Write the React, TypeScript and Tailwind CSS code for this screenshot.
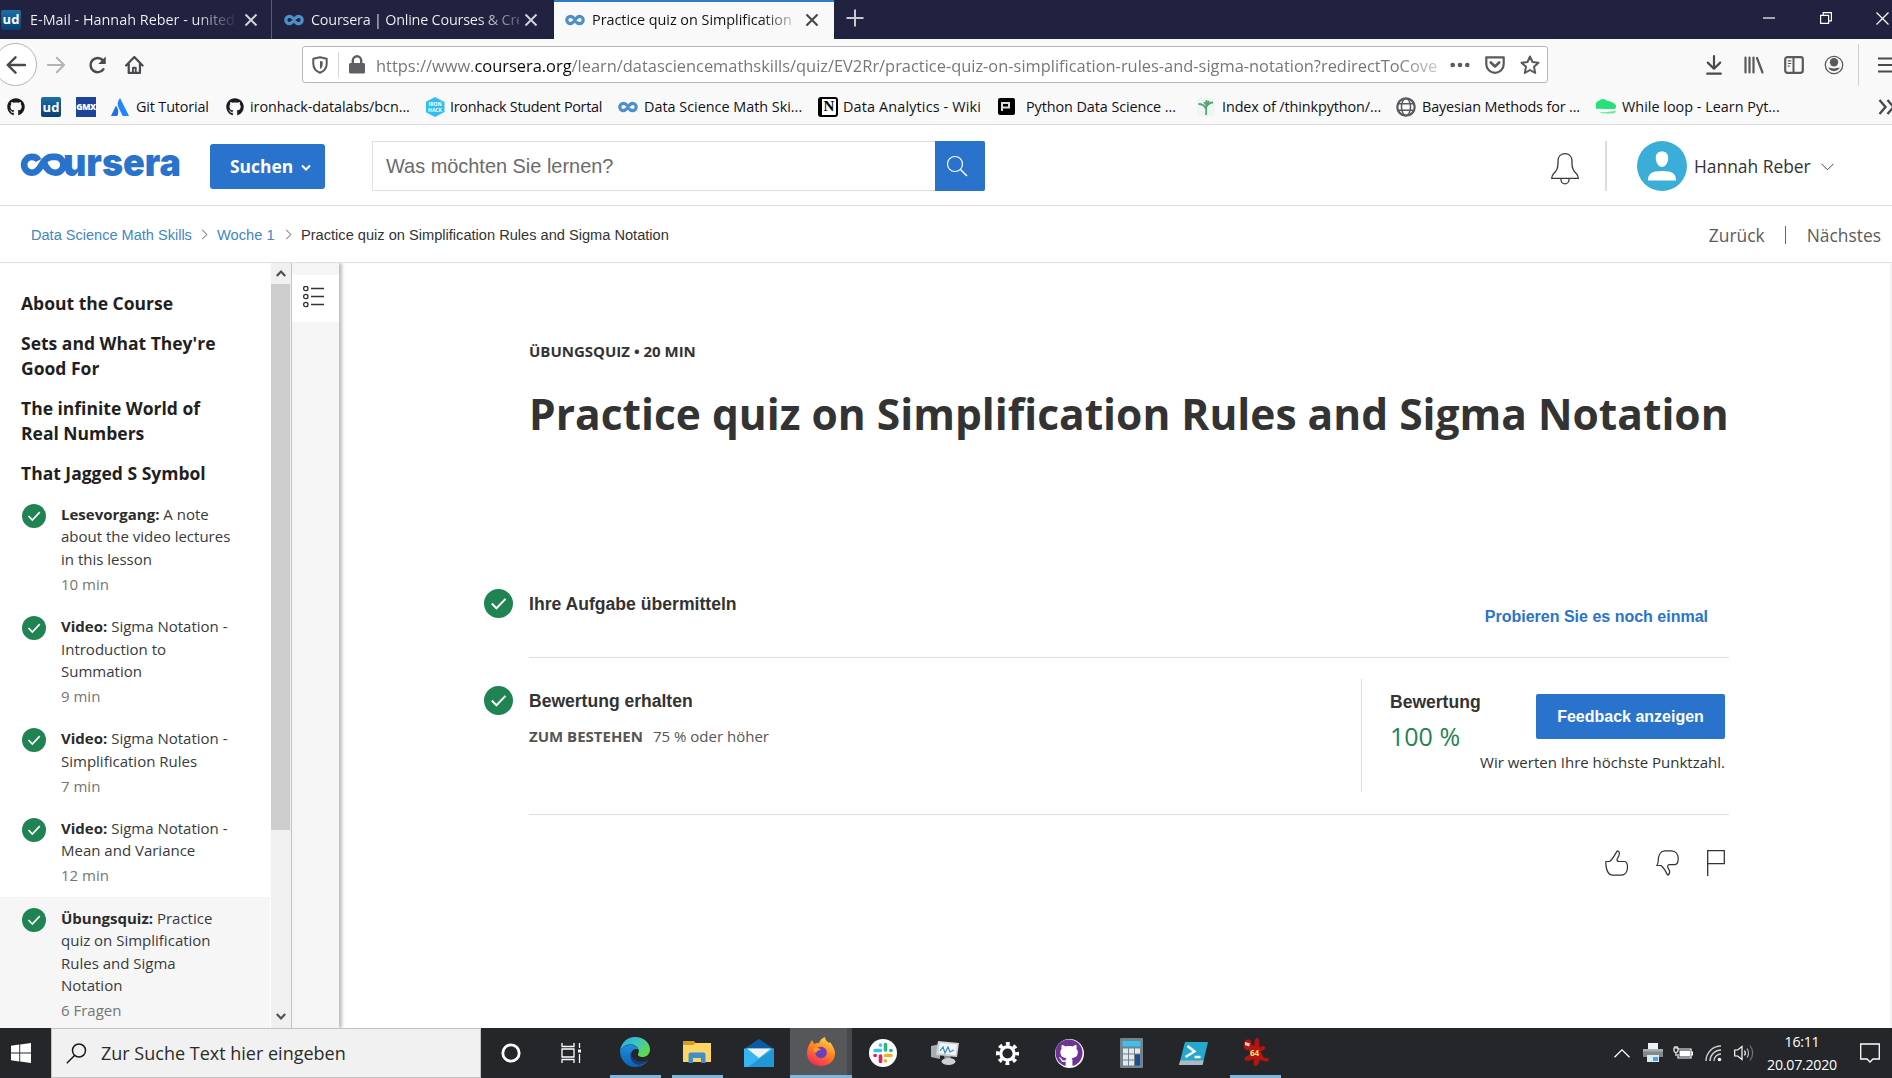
import React, { ReactNode } from 'react';
import { FaGithub } from 'react-icons/fa';

const GREEN = '#1f8354';

function Infinity8({ className, color = '#4f8fc9' }: { className: string; color?: string }) {
  return (
    <svg viewBox="0 0 40 22" className={className} fill="none" stroke={color} strokeWidth="6.4" strokeLinecap="round">
      <path d="M16.5 6C14.8 4.3 13.2 3.6 11 3.6a7.4 7.4 0 0 0 0 14.8c8.500 0 9.500-14.800 18-14.800a7.400 7.400 0 0 1 0 14.800c-2.200 0-3.800-.7-5.500-2.400" />
    </svg>
  );
}

function UdIcon() {
  return (
    <div className="flex h-5 w-5 shrink-0 items-center justify-center rounded-[2px] bg-gradient-to-b from-[#1d6fa8] to-[#0a3f73] text-[13px] font-bold leading-none text-white">
      ud
    </div>
  );
}

function Check({ size }: { size: number }) {
  return (
    <svg width={size} height={size} viewBox="0 0 24 24" className="shrink-0">
      <circle cx="12" cy="12" r="12" fill={GREEN} />
      <path d="M6.500 12l3.800 4L17.800 8.200" fill="none" stroke="#fff" strokeWidth="1.700" />
    </svg>
  );
}

function X({ color, w = 2 }: { color: string; w?: number }) {
  return (
    <svg width="14" height="14" viewBox="0 0 14 14" className="shrink-0">
      <path d="M1.500 1.500l11 11M12.500 1.500l-11 11" stroke={color} strokeWidth={w} />
    </svg>
  );
}

function TabBar() {
  return (
    <div className="flex h-[39px] bg-[#20223f] text-[14.4px] text-[#f0f0f4]">
      <div className="flex w-[272px] items-center border-r border-[#5a5c75] pl-[1px]">
        <UdIcon />
        <span className="ml-[9px] w-[208px] whitespace-nowrap bg-gradient-to-r from-[#f4f4f8] from-80% to-[#20223f] bg-clip-text text-transparent">
          E-Mail - Hannah Reber - united
        </span>
        <span className="ml-[6px]"><X color="#d2d2da" /></span>
      </div>
      <div className="flex w-[282px] items-center pl-[12px]">
        <Infinity8 className="h-[12px] w-[20px] shrink-0" />
        <span className="ml-[7px] w-[208px] whitespace-nowrap bg-gradient-to-r from-[#f4f4f8] from-80% to-[#20223f] to-110% bg-clip-text tracking-[-0.220px] text-transparent">
          Coursera | Online Courses &amp; Cre
        </span>
        <span className="ml-[5px]"><X color="#d2d2da" /></span>
      </div>
      <div className="flex w-[280px] items-center border-t-2 border-[#2f7bc4] bg-[#f9f9fa] pb-px pl-[11px]">
        <Infinity8 className="h-[12px] w-[20px] shrink-0" />
        <span className="ml-[7px] w-[209px] whitespace-nowrap bg-gradient-to-r from-[#111] from-80% to-[#f9f9fa] bg-clip-text tracking-[-0.020px] text-transparent">
          Practice quiz on Simplification
        </span>
        <span className="ml-[4px]"><X color="#4a4a4f" w={2.2} /></span>
      </div>
      <svg width="18" height="18" viewBox="0 0 18 18" className="ml-[12px] mt-[9px]">
        <path d="M9 0.500v17M0.500 9h17" stroke="#c9c9d2" strokeWidth="2" />
      </svg>
      <div className="ml-auto flex items-center pb-[3px]">
        <svg width="12" height="12" viewBox="0 0 12 12"><path d="M0 6h12" stroke="#fff" strokeWidth="1.200" /></svg>
        <svg width="12" height="12" viewBox="0 0 12 12" className="ml-[45px]" fill="none" stroke="#fff" strokeWidth="1.200">
          <path d="M.6 3.400h8v8h-8zM3.200 3.400V.6h8.200v8.200H8.600" />
        </svg>
        <svg width="13" height="13" viewBox="0 0 13 13" className="ml-[44px] mr-[3px]"><path d="M.5.5l12 12M12.500.5l-12 12" stroke="#fff" strokeWidth="1.200" /></svg>
      </div>
    </div>
  );
}

function Toolbar() {
  return (
    <div className="flex h-[51px] items-center overflow-hidden bg-[#f9f9fa]">
      <div className="-ml-[6px] flex h-[43px] w-[43px] shrink-0 items-center justify-center rounded-full border border-[#b4b4b8] bg-white">
        <svg width="20" height="18" viewBox="0 0 20 18" fill="none" stroke="#4a4a4e" strokeWidth="2.400" strokeLinecap="round" strokeLinejoin="round">
          <path d="M19 9H2M9.500 1.300L1.700 9l7.800 7.700" />
        </svg>
      </div>
      <svg width="20" height="18" viewBox="0 0 20 18" fill="none" stroke="#b5b5b8" strokeWidth="2.200" strokeLinecap="round" strokeLinejoin="round" className="ml-[10px]">
        <path d="M1 9h17M10.500 1.300L18.300 9l-7.800 7.700" />
      </svg>
      <svg width="20" height="20" viewBox="0 0 20 20" className="ml-[22px]" fill="none" stroke="#4a4a4e" strokeWidth="2.600">
        <path d="M16.500 14.500A7.600 7.600 0 1 1 16 5" strokeLinecap="round" />
        <path d="M19 1v8h-8z" fill="#4a4a4e" stroke="none" />
      </svg>
      <svg width="20" height="20" viewBox="0 0 20 20" className="ml-[19px]" fill="none" stroke="#4a4a4e" strokeWidth="2.400" strokeLinejoin="round" strokeLinecap="round">
        <path d="M1.200 10.500L10 1.500l8.800 9M4 9v9.500h12V9" />
        <path d="M8.500 18v-5h3v5" strokeWidth="2" />
      </svg>
      <div className="ml-[158px] flex h-[37px] w-[1246px] shrink-0 items-center rounded-[3px] border border-[#b6b6ba] bg-white">
        <svg width="16" height="18" viewBox="0 0 16 18" className="ml-[9px]" fill="none" stroke="#5a5a5e" strokeWidth="2">
          <path d="M8 1.200l6.700 1.600v5c0 4.500-2.500 7.300-6.700 9-4.200-1.700-6.700-4.500-6.700-9v-5z" strokeLinejoin="round" />
          <path d="M8 5v8c1.800-1 2.700-2.500 2.700-5V5.500z" fill="#5a5a5e" stroke="none" />
        </svg>
        <div className="ml-[10px] h-[26px] w-px bg-[#d7d7db]" />
        <svg width="16" height="19" viewBox="0 0 16 19" className="ml-[10px]">
          <rect x="0" y="8" width="16" height="10.500" rx="1.500" fill="#5f5f63" />
          <path d="M3.800 9V5.500a4.200 4.200 0 0 1 8.400 0V9" fill="none" stroke="#5f5f63" strokeWidth="2.400" />
        </svg>
        <span className="ml-[11px] w-[1064px] whitespace-nowrap pt-[3px] text-[16.42px] leading-6 text-[#77777b] [mask-image:linear-gradient(to_right,black_96%,transparent_102%)]">
          https://www.<span className="text-[#0c0c0d]">coursera.org</span>/learn/datasciencemathskills/quiz/EV2Rr/practice-quiz-on-simplification-rules-and-sigma-notation?redirectToCove
        </span>
        <svg width="20" height="6" viewBox="0 0 20 6" className="ml-[10px]" fill="#5a5a5e"><circle cx="2.700" cy="3" r="2.300" /><circle cx="10" cy="3" r="2.300" /><circle cx="17.300" cy="3" r="2.300" /></svg>
        <svg width="20" height="18" viewBox="0 0 20 18" className="ml-[15px]" fill="none" stroke="#5a5a5e" strokeWidth="2.200" strokeLinecap="round" strokeLinejoin="round">
          <path d="M1.300 1.300h17.400v7a8.700 8.500 0 0 1-17.400 0z" /><path d="M5.800 6.500l4.200 4 4.200-4" strokeWidth="2.600" />
        </svg>
        <svg width="20" height="20" viewBox="0 0 20 20" className="ml-[15px]" fill="none" stroke="#5a5a5e" strokeWidth="2" strokeLinejoin="round">
          <path d="M10 1.500l2.500 5.500 6 .700-4.500 4.100 1.200 6.200L10 15l-5.200 3 1.200-6.200L1.500 7.700l6-.7z" />
        </svg>
      </div>
      <svg width="16" height="20" viewBox="0 0 16 20" className="ml-[158px] shrink-0" fill="none" stroke="#4a4a4e" strokeWidth="2.200" strokeLinecap="round" strokeLinejoin="round">
        <path d="M8 1.200v12M1.800 7.600L8 13.700l6.200-6.100M1.200 18.700h13.600" />
      </svg>
      <svg width="20" height="18" viewBox="0 0 20 18" className="ml-[22px] shrink-0" fill="none" stroke="#5a5a5e" strokeWidth="2.200" strokeLinecap="round">
        <path d="M1.500 1.500v15M5.500 1.500v15M9.500 1.500v15M13 2l5.500 14.500" />
      </svg>
      <svg width="20" height="18" viewBox="0 0 20 18" className="ml-[20px] shrink-0" fill="none" stroke="#5a5a5e" strokeWidth="2.200">
        <rect x="1.200" y="1.200" width="17.600" height="15.600" rx="2.200" /><path d="M9.500 1v16" strokeWidth="2" /><path d="M3.800 4.800h3.500M3.800 7.500h3.500M3.800 10.200h2" strokeWidth="1.200" />
      </svg>
      <svg width="20" height="20" viewBox="0 0 20 20" className="ml-[20px] shrink-0" fill="#5a5a5e">
        <circle cx="10" cy="10" r="8.700" fill="none" stroke="#5a5a5e" strokeWidth="1.300" /><circle cx="10" cy="7.200" r="4.200" /><path d="M4.200 12.600c2 .2 3.500 1 5.800 1s3.800-.8 5.800-1a6.500 6.500 0 0 1-11.600 0z" />
      </svg>
      <div className="ml-[14px] h-[42px] w-px shrink-0 bg-[#d0d0d4]" />
      <svg width="14" height="16" viewBox="0 0 14 16" className="ml-[19px] shrink-0" stroke="#4a4a4e" strokeWidth="2"><path d="M0 1.500h14M0 8h14M0 14.500h14" /></svg>
    </div>
  );
}

function Bookmark({ width, icon, children }: { width: string; icon: ReactNode; children?: ReactNode }) {
  return (
    <div className={`flex shrink-0 items-center whitespace-nowrap ${width}`}>
      <span className="flex h-5 w-5 shrink-0 items-center justify-center">{icon}</span>
      {children}
    </div>
  );
}

function Bookmarks() {
  return (
    <div className="flex h-[35px] items-center border-b border-[#dcdcde] bg-[#f9f9fa] pl-[6px] text-[14.4px] text-[#111114]">
      <Bookmark width="w-[35px]" icon={<FaGithub size={18} color="#1b1b1f" />} />
      <Bookmark width="w-[35px]" icon={<UdIcon />} />
      <Bookmark width="w-[34px]" icon={<span className="flex h-5 w-5 items-center justify-center bg-[#1c449b] text-[8.500px] font-extrabold tracking-[-0.400px] text-white">GMX</span>} />
      <Bookmark width="w-[115px]" icon={
        <svg width="18" height="18" viewBox="0 0 18 18"><path d="M9 0c-2.800 3.500-3 7-1 10.500L11.700 18H18z" fill="#2684ff" /><path d="M5 7.500L0 18h6.200C8 14.500 7.500 11 5 7.500z" fill="#1f6fe0" /></svg>
      }><span className="ml-[6px] tracking-[-0.150px]">Git Tutorial</span></Bookmark>
      <Bookmark width="w-[200px]" icon={<FaGithub size={18} color="#1b1b1f" />}><span className="ml-[5px] tracking-[-0.060px]">ironhack-datalabs/bcn...</span></Bookmark>
      <Bookmark width="w-[193px]" icon={
        <span className="flex h-5 w-[19px] flex-col items-center justify-center bg-[#35bdf0] text-[5px] font-bold leading-[6px] text-white [clip-path:polygon(50%_0,100%_25%,100%_75%,50%_100%,0_75%,0_25%)]"><span>IRON</span><span>HACK</span></span>
      }><span className="ml-[5px] tracking-[-0.290px]">Ironhack Student Portal</span></Bookmark>
      <Bookmark width="w-[200px]" icon={<Infinity8 className="h-[12px] w-[20px]" />}><span className="ml-[6px] tracking-[-0.010px]">Data Science Math Ski...</span></Bookmark>
      <Bookmark width="w-[178px]" icon={
        <span className="flex h-5 w-5 items-center justify-center rounded-[3px] border-2 border-l-4 border-black bg-white font-['Liberation_Serif'] text-[15px] font-bold leading-none text-black">N</span>
      }><span className="ml-[5px] tracking-[0.150px]">Data Analytics - Wiki</span></Bookmark>
      <Bookmark width="w-[200px]" icon={
        <span className="flex h-[17px] w-[17px] items-center justify-center rounded-[2px] bg-black"><svg width="10" height="9" viewBox="0 0 10 9" fill="none" stroke="#ddd" strokeWidth="2"><path d="M1 9V1h7v4.500H2" /></svg></span>
      }><span className="ml-[10px] tracking-[-0.080px]">Python Data Science ...</span></Bookmark>
      <Bookmark width="w-[200px]" icon={
        <svg width="18" height="18" viewBox="0 0 18 18" fill="none" stroke="#5aa27a" strokeWidth="1.800"><rect width="18" height="18" fill="#edf7ef" stroke="none" /><path d="M9 17C9.500 13 9 8 9.500 2M9 11C8 8 5 6 1.500 6M9.500 8.500C11 6 13 4.500 16 4.500M7 4l2.500 3L12 3" /></svg>
      }><span className="ml-[6px] tracking-[-0.100px]">Index of /thinkpython/...</span></Bookmark>
      <Bookmark width="w-[200px]" icon={
        <svg width="20" height="20" viewBox="0 0 20 20" fill="none" stroke="#5a5a5e" strokeWidth="1.500"><circle cx="10" cy="10" r="8.700" strokeWidth="2.200" /><ellipse cx="10" cy="10" rx="4.500" ry="8.500" /><path d="M2 6.800h16M2 13.200h16" /></svg>
      }><span className="ml-[6px] tracking-[-0.130px]">Bayesian Methods for ...</span></Bookmark>
      <Bookmark width="w-[259px]" icon={
        <svg width="20" height="16" viewBox="0 0 20 16"><path d="M0 4.500c0-1.500 1.500-2.500 3.500-3 2-2 5-2 7 0 4 .5 8 2.500 9.500 5 .3 2-.5 3-2 3.500C12 10.500 6 9 0 10z" fill="#26e07b" /><path d="M3 13c5 1 11-.5 17-1-1 2.500-3 2.500-7 2.500-4 .2-8 0-10-1.500z" fill="#5fe79d" /></svg>
      }><span className="ml-[6px] tracking-[0.010px]">While loop - Learn Pyt...</span></Bookmark>
      <svg width="16" height="16" viewBox="0 0 16 16" className="ml-[23px] shrink-0" fill="none" stroke="#4a4a4e" strokeWidth="2.400"><path d="M1.500 1l6 7-6 7M9.500 1l6 7-6 7" /></svg>
    </div>
  );
}

function SiteHeader() {
  return (
    <div className="flex h-[81px] items-start border-b border-[#dedede] bg-white">
      <svg width="162" height="64" viewBox="0 -14 162 64" className="ml-[20px] mt-[8px]">
        <path
          d="M18.500 13.500C17 10.800 14.800 9.900 12 9.900a7.900 7.900 0 0 0 0 15.800c4.800 0 7.200-3.600 9.600-7.900C24 13.500 26.500 9.900 32 9.900h3.500a7.900 7.900 0 0 1 0 15.800c-5.500 0-9-3.500-11-9"
          fill="none" stroke="#2a73cc" strokeWidth="6.600"
        />
        <text x="43" y="28.800" fontFamily="Inter" fontWeight="900" fontSize="39" textLength="118" lengthAdjust="spacingAndGlyphs" fill="#2a73cc">ursera</text>
      </svg>
      <button className="ml-[28px] mt-[19px] flex h-[45px] w-[115px] items-center rounded-[3px] bg-[#2a73cc] pl-[20px] text-[17.400px] font-bold text-white">
        Suchen
        <svg width="10" height="8" viewBox="0 0 10 8" className="ml-[8px] mt-[3px]" fill="none" stroke="#fff" strokeWidth="2"><path d="M1 1.500l4 4 4-4" /></svg>
      </button>
      <div className="ml-[47px] mt-[16px] flex h-[50px] w-[613px] border border-r-0 border-[#dedede]">
        <div className="flex flex-1 items-center pl-[13px] pt-px font-['Liberation_Sans'] text-[19.930px] text-[#6b6b6b]">Was möchten Sie lernen?</div>
        <div className="-my-px flex w-[50px] items-center justify-center rounded-r-[2px] bg-[#2a73cc]">
          <svg width="22" height="22" viewBox="0 0 22 22" className="-ml-[7px]" fill="none" stroke="#fff" strokeWidth="1.200"><circle cx="9" cy="9" r="7.500" /><path d="M14.500 14.500L21 21" strokeWidth="1.500" /></svg>
        </div>
      </div>
      <div className="ml-auto mt-[16px] flex h-[50px] items-center">
        <svg width="28" height="32" viewBox="0 0 28 32" className="mt-[6px]" fill="none" stroke="#3a3a3a" strokeWidth="1.300">
          <path d="M.7 25.300c0-2 .8-3.500 2.300-5C6 17.500 7 14.500 7 10.500V8c0-4.500 3-7.300 7-7.300S21 3.500 21 8v2.500c0 4 1 7 4 9.800 1.500 1.500 2.300 3 2.300 5zM10 25.500v1.300a4 4 0 0 0 8 0v-1.300" />
        </svg>
        <div className="ml-[26px] h-[50px] w-[2px] bg-[#dcdcdc]" />
        <svg width="50" height="50" viewBox="0 0 50 50" className="ml-[30px]">
          <circle cx="25" cy="25" r="25" fill="#3badd9" />
          <path d="M25 10.500c4.200 0 6.200 2.500 6.200 6.500 0 4.500-2.700 9-6.200 9s-6.200-4.500-6.200-9c0-4 2-6.500 6.200-6.500zM11 39.500c0-6.500 3-9.500 14-9.500s14 3 14 9.500z" fill="#fff" />
        </svg>
        <span className="ml-[7px] w-[127px] pt-px text-[17.400px] text-[#333]">Hannah Reber</span>
        <svg width="13" height="8" viewBox="0 0 13 8" className="mr-[58px] mt-px" fill="none" stroke="#444" strokeWidth="1"><path d="M.5.8l6 6 6-6" /></svg>
      </div>
    </div>
  );
}

function Crumb() {
  return <svg width="7" height="11" viewBox="0 0 6 9" fill="none" stroke="#8a8a8a" strokeWidth="0.900"><path d="M1 .5l4 4-4 4" /></svg>;
}

function Breadcrumbs() {
  return (
    <div className="flex h-[57px] items-center border-b border-[#dedede] bg-white pl-[31px] pt-px font-['Liberation_Sans'] text-[14.560px] leading-[20px]">
      <span className="w-[170px] pt-px text-[#3f86c4]">Data Science Math Skills</span>
      <Crumb />
      <span className="ml-[9px] w-[68px] pt-px text-[14.700px] text-[#3f86c4]">Woche 1</span>
      <Crumb />
      <span className="ml-[9px] pt-px text-[14.620px] text-[#333]">Practice quiz on Simplification Rules and Sigma Notation</span>
      <div className="ml-auto mr-[11px] flex items-center font-['Open_Sans'] text-[17.400px] text-[#5b5b5b]">
        <span>Zurück</span>
        <span className="ml-[20px] mr-[21px] h-[18px] w-px bg-[#666]" />
        <span>Nächstes</span>
      </div>
    </div>
  );
}

const lessons = [
  { kind: 'Lesevorgang:', lines: ['A note', 'about the video lectures', 'in this lesson'], meta: '10 min' },
  { kind: 'Video:', lines: ['Sigma Notation -', 'Introduction to', 'Summation'], meta: '9 min' },
  { kind: 'Video:', lines: ['Sigma Notation -', 'Simplification Rules'], meta: '7 min' },
  { kind: 'Video:', lines: ['Sigma Notation -', 'Mean and Variance'], meta: '12 min' },
  { kind: 'Übungsquiz:', lines: ['Practice', 'quiz on Simplification', 'Rules and Sigma', 'Notation'], meta: '6 Fragen', active: true },
];

function Sidebar() {
  return (
    <div className="relative z-10 flex h-full w-[340px] shrink-0">
      <div className="h-full w-[271px] overflow-hidden">
        <div className="flex flex-col gap-[15px] pl-[21px] pt-[28px] text-[17.500px] font-bold leading-[25px] text-[#1f1f1f]">
          <p>About the Course</p>
          <p>Sets and What They're<br />Good For</p>
          <p>The infinite World of<br />Real Numbers</p>
          <p>That Jagged S Symbol</p>
        </div>
        <div className="pt-[7px]">
          {lessons.map((l, i) => (
            <div key={i} className={l.active ? 'mr-px flex bg-[#f6f6f6] pb-[10px] pl-[21.500px] pt-[10px]' : 'flex pb-[10px] pl-[21.500px] pt-[10px]'}>
              <div className="pt-px"><Check size={24} /></div>
              <div className="ml-[15.500px] text-[15px] leading-[22.400px] text-[#373a3c]">
                {l.lines.map((t, j) => (
                  <div key={j} className="whitespace-nowrap">
                    {j === 0 && <b className="text-[#2b2b2b]">{l.kind} </b>}
                    {t}
                  </div>
                ))}
                <div className="pt-[2.500px] text-[#757575]">{l.meta}</div>
              </div>
            </div>
          ))}
        </div>
      </div>
      <div className="flex h-full w-[20px] flex-col items-center bg-[#f0f0f0]">
        <svg width="10" height="7" viewBox="0 0 10 7" className="mr-px mt-[7px] shrink-0" fill="none" stroke="#505050" strokeWidth="2.200"><path d="M.8 6L5 1.600 9.200 6" /></svg>
        <div className="mr-px mt-[7px] h-[546px] w-[19px] shrink-0 bg-[#cdcdcd]" />
        <svg width="10" height="7" viewBox="0 0 10 7" className="mb-[8px] mr-px mt-auto shrink-0" fill="none" stroke="#505050" strokeWidth="2.200"><path d="M.8 1L5 5.400 9.200 1" /></svg>
      </div>
      <div className="h-full w-[48px] border-l border-[#c4c4c4] bg-[#f5f5f5] pt-[12px] shadow-[3px_0_3px_rgba(0,0,0,0.25)]">
        <div className="h-[47px] bg-white pl-[11px] pt-[11px]">
          <svg width="22" height="22" viewBox="0 0 22 22" fill="none" stroke="#333" strokeWidth="1.300">
            <circle cx="2.800" cy="2.500" r="2.200" /><circle cx="2.800" cy="10.500" r="2.200" /><circle cx="2.800" cy="18.500" r="2.200" />
            <path d="M8 2.500H21M8 10.500H21M8 18.500H21" />
          </svg>
        </div>
      </div>
    </div>
  );
}

function Main() {
  return (
    <div className="min-w-0 flex-1 bg-white pl-[144px]">
      <div className="ml-[45px] w-[1200px] pt-[76px]">
        <div className="text-[15px] font-bold leading-[24px] text-[#333]">ÜBUNGSQUIZ • 20 MIN</div>
        <h1 className="mt-[22px] whitespace-nowrap text-[42.500px] font-bold leading-[58px] text-[#333]">Practice quiz on Simplification Rules and Sigma Notation</h1>
      </div>
      <div className="mt-[135px] flex w-[1245px] font-['Liberation_Sans']">
        <div className="pt-[11px]"><Check size={29} /></div>
        <div className="ml-[16px] flex h-[80px] flex-1 justify-between border-b border-[#dedede]">
          <span className="pt-[14px] text-[17.600px] font-bold leading-[24px] text-[#333]">Ihre Aufgabe übermitteln</span>
          <span className="mr-[21px] pt-[27px] text-[16px] font-bold leading-[24px] text-[#2a73cc]">Probieren Sie es noch einmal</span>
        </div>
      </div>
      <div className="flex w-[1245px]">
        <div className="pt-[28px]"><Check size={29} /></div>
        <div className="ml-[16px] flex h-[157px] flex-1 justify-between border-b border-[#dedede]">
          <div>
            <div className="pt-[31px] font-['Liberation_Sans'] text-[17.550px] font-bold leading-[24px] text-[#333]">Bewertung erhalten</div>
            <div className="mt-[11px] flex text-[15px] leading-[24px] text-[#555]"><b className="w-[124px]">ZUM BESTEHEN</b><span>75 % oder höher</span></div>
          </div>
          <div className="mt-[21px] flex h-[113px] w-[368px] border-l border-[#dedede]">
            <div className="ml-[28px] w-[90px]">
              <div className="pt-[11px] font-['Liberation_Sans'] text-[17.550px] font-bold leading-[24px] text-[#333]">Bewertung</div>
              <div className="pt-[7px] text-[25px] leading-[30px] text-[#1f8354]">100 %</div>
            </div>
            <div className="mr-[4px] flex flex-1 flex-col items-end pt-[15px]">
              <button className="flex h-[45px] w-[189px] items-center justify-center rounded-[2px] bg-[#2a73cc] font-['Liberation_Sans'] text-[16px] font-bold text-white">Feedback anzeigen</button>
              <div className="whitespace-nowrap pt-[11px] text-[15px] leading-[24px] text-[#333]">Wir werten Ihre höchste Punktzahl.</div>
            </div>
          </div>
        </div>
      </div>
      <div className="flex w-[1241px] justify-end gap-[28px] pt-[35px] text-[#333]">
        <svg width="23" height="26" viewBox="0 0 23 26" fill="none" stroke="currentColor" strokeWidth="1.200" strokeLinejoin="round">
          <path d="M.8 11.500h3.700c3-1.500 5-6.500 7.800-10.700 2 .4 2.500 2 1.700 4.500-.8 2.300-2 3.200-2 4.500 0 1.200.7 1.700 2 1.700h5c2.500 0 3.500 2.500 3.500 5.500 0 4.500-2.200 8.200-6.500 8.200H8c-4.500 0-7.200-5-7.200-13.700z" />
        </svg>
        <svg width="23" height="26" viewBox="0 0 23 26" fill="none" stroke="currentColor" strokeWidth="1.200" strokeLinejoin="round">
          <path d="M.8 15.500c1-1.500 1.400-2.500 1.400-4.500C2.200 4.500 4.800.8 9 .8h6.500c4.300 0 6.700 3.500 6.700 8.200 0 3.500-1.200 5.700-4 5.700h-4.700c-1.500 0-2 .8-1.800 2.200.3 1.500 1.300 2.300 1.800 4 .4 1.800 0 3.500-1.800 4.300C9.500 21.500 8 17.500 5 15.500z" />
        </svg>
        <svg width="18" height="26" viewBox="0 0 18 26" fill="none" stroke="currentColor" strokeWidth="1.300"><path d="M.7 26V.7h16.600v13H.7" /></svg>
      </div>
    </div>
  );
}

function TaskButton({ bar, wide, active, children }: { bar?: boolean; wide?: boolean; active?: boolean; children: ReactNode }) {
  return (
    <div className={active ? 'flex w-[62px] flex-col items-center border-r-[5px] border-[#47484b] bg-[#56575a]' : 'flex w-[62px] flex-col items-center'}>
      <div className={active ? 'flex flex-1 items-center pl-[4px]' : 'flex flex-1 items-center'}>{children}</div>
      {bar && <div className={wide ? '-mr-[5px] h-[3px] w-[62px] bg-[#7db6de]' : 'h-[3px] w-[51px] bg-[#7db6de]'} />}
    </div>
  );
}

function Taskbar() {
  return (
    <div className="flex h-[50px] bg-[#24262a] text-white">
      <div className="flex w-[51px] items-center justify-center pr-[9px]">
        <svg width="20" height="20" viewBox="0 0 20 20" fill="#fff"><path d="M0 2.800l8.300-1.200v8H0zM9.200 1.500L20 0v9.600H9.200zM0 10.500h8.300v8L0 17.300zM9.200 10.500H20V20L9.200 18.500z" /></svg>
      </div>
      <div className="flex w-[430px] items-center border border-[#c3c3c3] bg-[#f1f1f1]">
        <svg width="21" height="21" viewBox="0 0 21 21" className="ml-[14px]" fill="none" stroke="#1a1a1a" strokeWidth="1.500"><circle cx="13" cy="7.500" r="6.500" /><path d="M8.500 12.500L.8 20.200" /></svg>
        <span className="ml-[14px] text-[18px] text-[#2b2b2b]">Zur Suche Text hier eingeben</span>
      </div>
      <div className="-ml-px flex">
        <TaskButton><svg width="20" height="20" viewBox="0 0 20 20"><circle cx="10" cy="10" r="8.200" fill="none" stroke="#fff" strokeWidth="2.800" /></svg></TaskButton>
        <TaskButton><svg width="21" height="20" viewBox="0 0 21 20" fill="none" stroke="#fff" strokeWidth="1.300" className="-ml-[3px]"><path d="M1 0v3.500h12V0M1 20v-3.500h12V20M1 6h12v8H1zM18.500 0v5M18.500 11v9" /><rect x="17" y="6.500" width="3" height="3" fill="#fff" stroke="none" /></svg></TaskButton>
        <TaskButton bar>
          <svg width="30" height="30" viewBox="0 0 30 30">
            <defs>
              <linearGradient id="eg" x1="0" y1="0" x2="1" y2="0.600"><stop offset="0" stopColor="#2ba6dc" /><stop offset="0.500" stopColor="#36c6c8" /><stop offset="1" stopColor="#62d94b" /></linearGradient>
              <linearGradient id="eb" x1="0" y1="0" x2="0" y2="1"><stop offset="0" stopColor="#1b8fdc" /><stop offset="1" stopColor="#1160b8" /></linearGradient>
            </defs>
            <path d="M0 14C1 6 7 0 15 0c9 0 15 6 15 12.500 0 5-4 7.500-7.500 7.500-3.500 0-5-1.500-4.500-3 1-2 1-3 .5-4.500-1-3-4-5-8-5C6 7.500 2 10 0 14z" fill="url(#eg)" />
            <path d="M0 14c2-4 6-6 10.500-6 4 0 7 2 8 4.500-3-1.500-7 .5-7.500 4.500-.5 5 4 9 9 9 3 0 6-1 8-2.500C25 28 20 30 15 30 6 30 0 22 0 14z" fill="url(#eb)" />
            <path d="M11.500 14c-3 6 0 13 7.500 14 4-.5 7.500-2.500 9-5-7 3.500-15 1-16.500-5z" fill="#153f75" />
          </svg>
        </TaskButton>
        <TaskButton bar>
          <svg width="28" height="24" viewBox="0 0 28 24"><path d="M0 1h10.500l2 2H28v19H0z" fill="#fbd667" /><path d="M0 1h10.500l2 2-2 2H0z" fill="#d59e1d" /><path d="M5.500 23v-8.500a2 2 0 0 1 2-2h13a2 2 0 0 1 2 2V23H18v-5h-8v5z" fill="#3f8ecb" /></svg>
        </TaskButton>
        <TaskButton>
          <svg width="30" height="28" viewBox="0 0 30 28"><path d="M0 10L15 0l15 10z" fill="#0d5aa5" /><path d="M0 9.500h30V28H0z" fill="#37b5ee" /><path d="M30 9.500V28H4z" fill="#1f97d8" /><path d="M3 9.500h24L15 19z" fill="#f2f2f2" /></svg>
        </TaskButton>
        <TaskButton bar wide active>
          <svg width="28" height="29" viewBox="0 0 28 29">
            <defs><linearGradient id="ff" x1="0.800" y1="0" x2="0.300" y2="1"><stop offset="0" stopColor="#ffe14a" /><stop offset="0.450" stopColor="#ff8a1f" /><stop offset="1" stopColor="#f5285a" /></linearGradient></defs>
            <path d="M2 8c1-2 2-3 3-5l2 4c2-1 3-1 5-1 1-3 3-5 6-6 0 3 2 4 4 6l1-1c3 4 5 8 5 11 0 8-6 13-14 13S0 24 0 16c0-3 1-6 2-8z" fill="url(#ff)" />
            <circle cx="14" cy="15.500" r="5.800" fill="#6a3fc0" /><path d="M7 11c3-1 5 0 7 2-3 0-4 1-5 3-2-1-3-3-2-5z" fill="#ff9a26" />
          </svg>
        </TaskButton>
        <TaskButton>
          <svg width="28" height="28" viewBox="0 0 28 28" fill="none" strokeWidth="3.600" strokeLinecap="round">
            <circle cx="14" cy="14" r="14" fill="#fff" />
            <path d="M6 11.500h5.500M11.500 6v.2" stroke="#36c5f0" /><path d="M16.500 5.500V11M22 11.500h-.2" stroke="#2eb67d" /><path d="M22 16.500h-5.500M16.500 22v-.2" stroke="#ecb22e" /><path d="M11.500 22.500V17M6 16.500h.2" stroke="#e01e5a" />
          </svg>
        </TaskButton>
        <TaskButton>
          <svg width="28" height="26" viewBox="0 0 28 26"><path d="M0 6l9-2v15l-9-2z" fill="#a9adb0" /><path d="M7 1l21 2-2 14L5 15z" fill="#cfd4d7" /><path d="M9 3l17 1.500-1.500 10.500L7.500 13z" fill="#eef6fb" /><path d="M9 11l3-4 2 6 3-6 2 5 4-2" fill="none" stroke="#3b87c4" strokeWidth="1.200" /><path d="M13 16h7l-1 4h-5z" fill="#8e9294" /><ellipse cx="17.500" cy="21.500" rx="7" ry="3.500" fill="#cbcfd1" /></svg>
        </TaskButton>
        <TaskButton>
          <svg width="23" height="23" viewBox="0 0 23 23" fill="none" stroke="#fff"><circle cx="11.500" cy="11.500" r="6.700" strokeWidth="3.200" /><circle cx="11.500" cy="11.500" r="9.600" strokeWidth="3.800" strokeDasharray="3.770 3.770" strokeDashoffset="1.880" /></svg>
        </TaskButton>
        <TaskButton>
          <span className="flex h-[29px] w-[29px] items-center justify-center rounded-full bg-white"><FaGithub size={28} color="#6f3394" /></span>
        </TaskButton>
        <TaskButton>
          <svg width="23" height="30" viewBox="0 0 23 30"><rect width="23" height="30" rx="1" fill="#75818b" /><rect x="2.500" y="3" width="18" height="5.500" fill="#3cc0ee" /><g fill="#e3e8ec"><path d="M3 10.500h5v5H3zM9 10.500h5v5H9zM15 10.500h5v5h-5zM3 16.500h5v5H3zM9 16.500h5v5H9zM3 22.500h5v5H3zM9 22.500h5v5H9z" /></g><path d="M15 16.500h5v11h-5z" fill="#1b4f8f" /></svg>
        </TaskButton>
        <TaskButton>
          <svg width="29" height="23" viewBox="0 0 29 23"><path d="M6 0h23l-5.500 23H0z" fill="#24a9cc" /><path d="M1.300 18.500h23.300L23.500 23H0z" fill="#aebbc1" /><path d="M8.500 4l7 5.500L6.500 15M15.500 15h6" fill="none" stroke="#fff" strokeWidth="2.400" /></svg>
        </TaskButton>
        <TaskButton bar>
          <div className="relative h-[28px] w-[28px]">
            <svg width="28" height="28" viewBox="0 0 28 28"><path d="M3 6c0-3 2-5 4.500-4.500C10 2 11 4 10.500 6.500l3 1.500C13 5 14 0 16 0c3 0 2 5 2.500 9l4-1c2 0 2 3 0 4l-3 1.500 3 6 5 1c1.500 2-1 4-4 2.500l-5-1c0 3-2 6-4.500 6-2 0-1.500-3-1-7-3 1-6 2.500-8.500 1.500-2-1-1-3.500 1-4l4-2.500L8 12C4 13 2 10 3 6z" fill="#b51510" /><path d="M4 4l5 1.500-1 3L4 7z" fill="#e9d8d0" /></svg>
            <span className="absolute left-[9px] top-[11px] text-[8px] font-bold leading-none text-[#ffe27a]">64</span>
          </div>
        </TaskButton>
      </div>
      <div className="ml-auto flex items-center pr-[12px]">
        <svg width="16" height="9" viewBox="0 0 16 9" fill="none" stroke="#fff" strokeWidth="1.300"><path d="M.5 8.300L8 .9l7.500 7.400" /></svg>
        <svg width="20" height="20" viewBox="0 0 20 20" className="ml-[13px]"><path d="M5 0h10v6H5z" fill="#eef1f3" /><path d="M0 6h20v8H0z" fill="#83888c" /><path d="M0 6h20v2.500H0z" fill="#a9adb0" /><path d="M4 12h12v7H4z" fill="#dbe9f2" /><path d="M10 14h5v4h-5z" fill="#4da6d3" /></svg>
        <svg width="20" height="14" viewBox="0 0 20 14" className="ml-[10px]" fill="none" stroke="#fff" strokeWidth="1.200"><path d="M5 3h13v9H5V8M18.500 6h1v3h-1" /><rect x="6.500" y="4.500" width="10.500" height="6" fill="#fff" stroke="none" /><path d="M1 2h4v2.500a2 2 0 0 1-4 0zM2 0v2M4 0v2M3 6.500V10" /></svg>
        <svg width="17" height="17" viewBox="0 0 17 17" className="ml-[12px]" fill="none" stroke="#d0d0d0" strokeWidth="1.400"><path d="M1 16A15 15 0 0 1 16 1M5 16A11 11 0 0 1 16 5M9 16a7 7 0 0 1 7-7" /><circle cx="14.500" cy="14.500" r="1.800" fill="#fff" stroke="none" /></svg>
        <svg width="20" height="18" viewBox="0 0 20 18" className="ml-[12px]" fill="none" stroke="#fff" strokeWidth="1.200"><path d="M.7 6h3L8 2.500v13L3.700 12h-3zM10.500 6.500c1 1.500 1 3.500 0 5" /><path d="M13 4.500c2 2.500 2 6.500 0 9" stroke="#bbb" /><path d="M16 1.500c3.500 4.500 3.500 10.500 0 15" stroke="#777" /></svg>
        <div className="ml-[13px] w-[70px] pb-px text-center text-[14.200px] leading-[23px] tracking-[-0.250px]"><div>16:11</div><div>20.07.2020</div></div>
        <svg width="20" height="21" viewBox="0 0 20 21" className="ml-[23px]" fill="none" stroke="#fff" strokeWidth="1.300"><path d="M.7 1h18.600v15H13l-3 3-3-3H.7z" /></svg>
      </div>
    </div>
  );
}

export default function App() {
  return (
    <div className="flex h-[1078px] w-[1892px] flex-col overflow-hidden bg-white font-['Open_Sans',sans-serif]">
      <TabBar />
      <Toolbar />
      <Bookmarks />
      <SiteHeader />
      <Breadcrumbs />
      <div className="flex h-[765px] overflow-hidden border-r-2 border-[#f3f3f3]">
        <Sidebar />
        <Main />
      </div>
      <Taskbar />
    </div>
  );
}
